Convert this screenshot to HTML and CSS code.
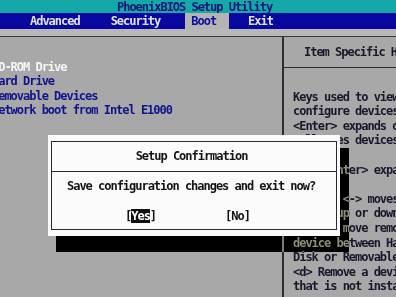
FILE: index.html
```html
<!DOCTYPE html>
<html lang="en">
  <head>
    <meta charset="UTF-8" />
    <meta name="viewport" content="width=device-width, initial-scale=1.0" />
    <title>PhoenixBIOS Setup Utility</title>
    <link rel="stylesheet" href="styles.css">
  </head>
  <body>
    <div class="screen">
      <header class="title">PhoenixBIOS Setup Utility</header>
      <nav class="menu">
        <span class="tab tab-advanced">Advanced</span>
        <span class="tab tab-security">Security</span>
        <span class="tab tab-boot active">Boot</span>
        <span class="tab tab-exit">Exit</span>
      </nav>
      <div class="band"></div>
      <main class="panes">
        <ul class="boot-list">
          <li class="current">CD-ROM Drive</li>
          <li>Hard Drive</li>
          <li>Removable Devices</li>
          <li>Network boot from Intel E1000</li>
        </ul>
        <section class="help">
          <div class="help-head">Item Specific Help</div>
          <div class="help-body">
            <div>Keys used to view or</div>
            <div>configure devices:</div>
            <div>&lt;Enter&gt; expands or</div>
            <div>collapses devices</div>
            <div>with +</div>
            <div>&lt;Ctrl+Enter&gt; expands all</div>
            <div>&nbsp;</div>
            <div>&lt;+&gt; and &lt;-&gt; moves the</div>
            <div>device up or down.</div>
            <div>&lt;n&gt; May move removable</div>
            <div>device between Hard</div>
            <div>Disk or Removable Disk</div>
            <div>&lt;d&gt; Remove a device</div>
            <div>that is not installed.</div>
          </div>
        </section>
      </main>

      <!-- confirmation popup -->
      <div class="dialog">
        <div class="dialog-frame">
          <div class="dialog-title">Setup Confirmation</div>
          <div class="dialog-text">Save configuration changes and exit now?</div>
          <div class="dialog-buttons">
            <span>[<span class="btn-on">Yes</span>]</span>
            <span>[No]</span>
          </div>
        </div>
      </div>
      <div class="shadow shadow-right"></div>
      <div class="shadow shadow-bottom"></div>
    </div>
  </body>
</html>
```

FILE: styles.css
```css
body {
  margin: 0;
  background-color: #a8a8a8;
  font-family: "DejaVu Sans Mono", monospace;
  font-size: 12px;
  font-weight: bold;
  letter-spacing: -1.02px;
  overflow: hidden;
}
.screen {
  position: relative;
  width: 396px;
  height: 297px;
  overflow: hidden;
  white-space: nowrap;
}
.title {
  height: 13px;
  line-height: 14px;
  padding-left: 117px;
  background-color: #14a8a8;
  color: #0c1478;
}
.menu {
  display: flex;
  height: 16px;
  line-height: 16px;
  background-color: #0808a0;
  color: #e2e2e2;
}
.tab-advanced {
  margin-left: 30px;
}
.tab-security {
  margin-left: 31px;
}
.tab-boot {
  margin-left: 25px;
  padding: 0 13px 0 6px;
}
.tab-exit {
  margin-left: 19px;
}
.tab.active {
  background-color: #b4b4b4;
  color: #0a10a0;
}
.band {
  height: 7px;
  background-color: #b8b8b8;
  border-bottom: 1px solid #3a3a3a;
}
.panes {
  display: grid;
  grid-template-columns: 284px 1fr;
  height: 260px;
}
.boot-list {
  box-sizing: border-box;
  margin: 0;
  padding: 22.5px 0 0;
  list-style: none;
  text-indent: -8px;
  line-height: 14.6px;
  color: #10148c;
  border-right: 2px solid #2e2e2e;
}
.boot-list .current {
  color: #f6f6f6;
}
.help {
  color: #18182a;
}
.help-head {
  height: 30px;
  line-height: 30px;
  padding-left: 20px;
  border-bottom: 1px solid #2e2e2e;
}
.help-body {
  padding: 21.7px 0 0 9px;
  line-height: 14.6px;
}
.dialog {
  position: absolute;
  left: 48px;
  top: 135px;
  width: 292px;
  height: 101px;
  box-sizing: border-box;
  padding: 6px 3px;
  background-color: #fbfbfb;
}
.dialog-frame {
  height: 100%;
  box-sizing: border-box;
  border: 1px solid #2a2a2a;
  color: #141414;
}
.dialog-title {
  height: 29px;
  line-height: 29px;
  padding-right: 5px;
  text-align: center;
  border-bottom: 1px solid #2a2a2a;
}
.dialog-text {
  margin-top: 7px;
  padding-left: 15px;
  line-height: 14.6px;
}
.dialog-buttons {
  display: flex;
  gap: 69px;
  margin-top: 15px;
  padding-left: 73px;
  line-height: 14.6px;
}
.btn-on {
  background-color: #111;
  color: #fff;
}
.shadow {
  position: absolute;
  background-color: #a8a8a8;
  mix-blend-mode: difference;
}
.shadow-right {
  left: 340px;
  top: 148px;
  width: 9px;
  height: 104px;
}
.shadow-bottom {
  left: 56px;
  top: 236px;
  width: 284px;
  height: 16px;
}
```
